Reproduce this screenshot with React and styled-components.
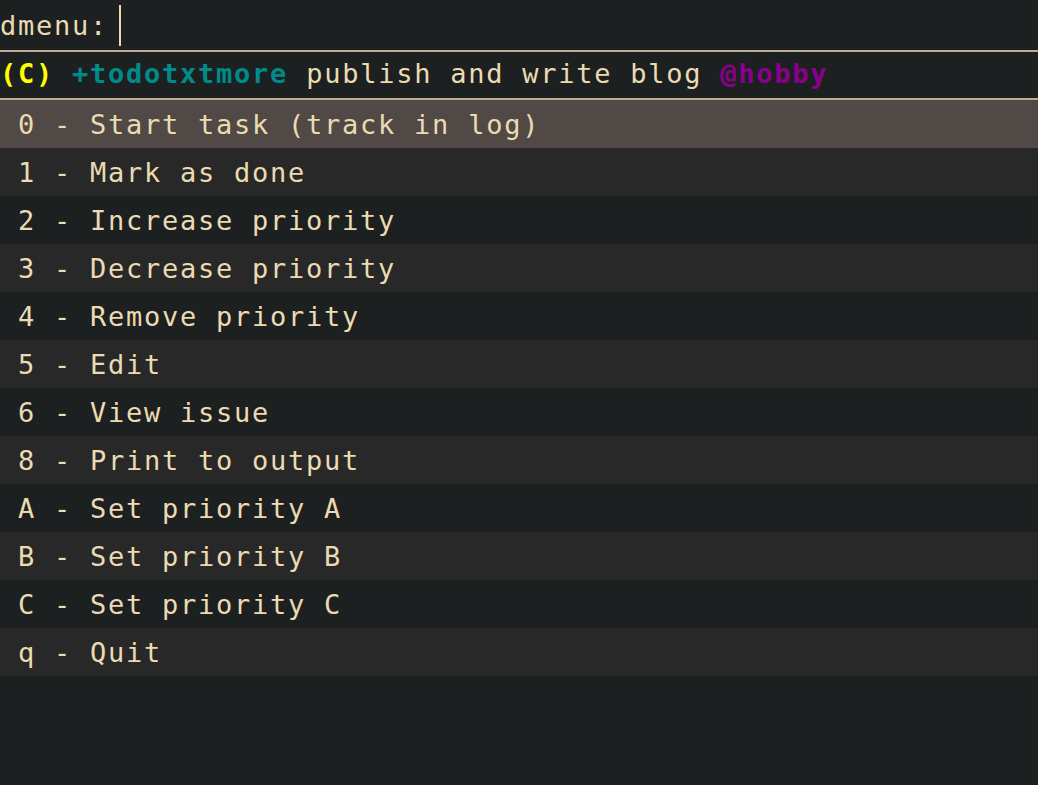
import styled, { createGlobalStyle } from "styled-components";

const GlobalStyle = createGlobalStyle`
  html, body {
    margin: 0;
    padding: 0;
    background: #1d2021;
  }
  #root {
    min-height: 100vh;
    background: #1d2021;
  }
`;

const options = [
  "0 - Start task (track in log)",
  "1 - Mark as done",
  "2 - Increase priority",
  "3 - Decrease priority",
  "4 - Remove priority",
  "5 - Edit",
  "6 - View issue",
  "8 - Print to output",
  "A - Set priority A",
  "B - Set priority B",
  "C - Set priority C",
  "q - Quit",
];

const Menu = styled.div`
  font-family: "DejaVu Sans Mono", "Liberation Mono", monospace;
  font-size: 27px;
  letter-spacing: 1.75px;
  color: #ebdbb2;
  background: #1d2021;
  white-space: pre;
`;

const PromptBar = styled.div`
  height: 50px;
  display: flex;
  align-items: center;
`;

const Cursor = styled.span`
  display: inline-block;
  width: 2px;
  height: 41px;
  margin-left: 11px;
  background: #ebdbb2;
`;

const TaskLine = styled.div`
  height: 46px;
  display: flex;
  align-items: center;
  padding-bottom: 3px;
  box-sizing: border-box;
  height: 50px;
  border-top: 2px solid #bdae93;
  border-bottom: 2px solid #bdae93;
`;

const Tag = styled.span`
  font-weight: bold;
  color: ${(p) => p.$color};
`;

const List = styled.div`
  display: flex;
  flex-direction: column;
`;

const Row = styled.div`
  height: 48px;
  display: flex;
  align-items: center;
  padding-left: 18px;
  background: ${(p) =>
    p.$selected ? "#504945" : p.$odd ? "#282828" : "#1d2021"};
`;

export default function App() {
  return (
    <>
      <GlobalStyle />
      <Menu>
        <PromptBar>
          dmenu:
          <Cursor />
        </PromptBar>
        <TaskLine>
          <span>
            <Tag $color="#ffff00">(C)</Tag> <Tag $color="#008b8b">+todotxtmore</Tag>{" "}
            publish and write blog <Tag $color="#8b008b">@hobby</Tag>
          </span>
        </TaskLine>
        <List>
          {options.map((o, i) => (
            <Row key={o} $selected={i === 0} $odd={i % 2 === 1}>
              {o}
            </Row>
          ))}
        </List>
      </Menu>
    </>
  );
}
